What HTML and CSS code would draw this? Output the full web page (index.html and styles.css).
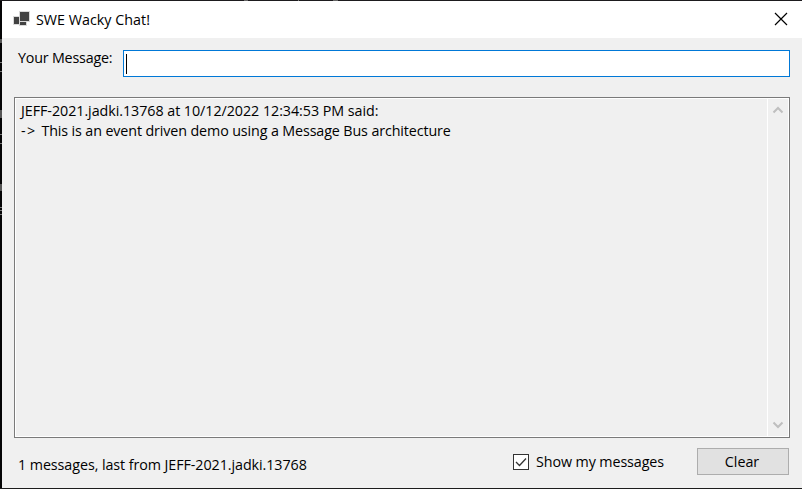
FILE: index.html
```html
<!DOCTYPE html>
<html lang="en">
<head>
<meta charset="utf-8">
<title>SWE Wacky Chat!</title>
<link rel="stylesheet" href="styles.css">
</head>
<body>
<main class="window">
  <header class="titlebar">
    <svg class="app-icon" width="17" height="17" viewBox="0 0 17 17" shape-rendering="crispEdges">
      <path fill="#d9d9d9" d="M6 0h11v11h-3v4H6v-1H0V5h6z"/>
      <path fill="#424242" d="M7 1h9v9H7zM1 6h5v7H1zM7 11h6v3H7z"/>
      <path fill="none" stroke="#d9d9d9" d="M6.500 1v13M6 10.500h10"/>
    </svg>
    <h1 class="title">SWE Wacky Chat!</h1>
    <svg class="close" width="14" height="14" viewBox="0 0 14 14"><path d="M1 1l12 12M13 1L1 13"/></svg>
  </header>
  <div class="compose">
    <label class="compose-label">Your Message:</label>
    <div class="field"><span class="caret"></span></div>
  </div>
  <section class="log">
    <div class="log-text">
      <p class="meta">JEFF-2021.jadki.13768 at 10/12/2022 12:34:53 PM said:</p>
      <p class="message"><span class="arrow">-&gt; </span>This is an event driven demo using a Message Bus architecture</p>
    </div>
    <div class="scrollbar">
      <svg width="12" height="8" viewBox="0 0 12 8"><path d="M1.500 6.500L6 2l4.500 4.500"/></svg>
      <svg width="12" height="8" viewBox="0 0 12 8"><path d="M1.500 1.500L6 6l4.500-4.500"/></svg>
    </div>
  </section>
  <footer class="footer">
    <span class="status">1 messages, last from JEFF-2021.jadki.13768</span>
    <div class="option">
      <svg class="check" width="16" height="16" viewBox="0 0 16 16">
        <rect x=".5" y=".5" width="15" height="15" fill="#fff" stroke="#333"/>
        <path d="M3 8l3.500 3.500L13 4.500" fill="none" stroke="#333" stroke-width="1.300"/>
      </svg>
      <span class="option-label">Show my messages</span>
    </div>
    <button class="clear">Clear</button>
  </footer>
</main>
</body>
</html>
```
FILE: styles.css
```css
* { box-sizing: border-box; }
body {
  margin: 0;
  height: 489px;
  padding: 1px 0 1px 2px;
  background: linear-gradient(#666, #666) 244px 0 / 4px 1px no-repeat,
    linear-gradient(#777, #777) 298px 0 / 1px 1px no-repeat,
    linear-gradient(#666, #666) 333px 0 / 5px 1px no-repeat,
    linear-gradient(#1d1b1e, #1d1b1e) 0 0 / 100% 1px no-repeat,
    linear-gradient(#1c1c1c, #1c1c1c) 0 100% / 100% 1px no-repeat,
    linear-gradient(#555, #555) 0 39px / 2px 4px no-repeat,
    linear-gradient(#777, #777) 0 62px / 2px 1px no-repeat,
    linear-gradient(#777, #777) 0 71px / 2px 1px no-repeat,
    linear-gradient(#555, #555) 0 110px / 2px 8px no-repeat,
    linear-gradient(#777, #777) 0 134px / 2px 1px no-repeat,
    linear-gradient(#777, #777) 0 143px / 2px 1px no-repeat,
    linear-gradient(#555, #555) 0 184px / 2px 7px no-repeat,
    linear-gradient(#777, #777) 0 207px / 2px 1px no-repeat,
    linear-gradient(#777, #777) 0 210px / 2px 1px no-repeat,
    linear-gradient(#777, #777) 0 214px / 2px 1px no-repeat, #050506;
  color: #000;
  font: 14.300px/20px "Open Sans", "Noto Sans", sans-serif;
  overflow: hidden;
}
h1, p { margin: 0; font: inherit; white-space: nowrap; }
.window { height: 487px; display: flex; flex-direction: column; background: #f0f0f0; }
.titlebar { height: 37px; display: flex; align-items: center; padding: 0 14px 0 11px; background: #fff; }
.app-icon { margin-right: 6px; }
.title { letter-spacing: .02px; }
.close { margin-left: auto; margin-bottom: 1px; fill: none; stroke: #000; stroke-width: 1.200; }
.compose { display: flex; height: 27px; margin: 12px 12px 20px 16px; }
.compose-label { width: 105px; line-height: 15px; letter-spacing: -.2px; white-space: nowrap; }
.field { flex: 1; padding: 3px 2px; background: #fff; border: 1px solid #0078d7; }
.caret { display: block; width: 1px; height: 20px; background: #000; }
.log { height: 341px; margin: 0 12px; display: flex; border: 1px solid #7a7a7a; box-shadow: inset 0 0 0 1px #fff; }
.log-text { flex: 1; padding: 3px 0 0 6px; }
.meta { letter-spacing: -.05px; }
.message { letter-spacing: -.12px; }
.arrow { letter-spacing: 1.300px; }
.scrollbar { width: 21px; margin: 1px 1px 1px 0; border-left: 1px solid #fff; display: flex; flex-direction: column; justify-content: space-between; padding: 7px 0 7px 4px; }
.scrollbar svg { fill: none; stroke: #bfbfbf; stroke-width: 2; }
.footer { display: flex; height: 27px; margin: 10px 13px 0 16px; white-space: nowrap; }
.status { width: 495px; line-height: 34px; letter-spacing: -.07px; }
.option { display: flex; flex: 1; align-items: center; }
.check { margin-right: 7px; }
.option-label { letter-spacing: -.1px; }
.clear { width: 92px; height: 27px; padding: 0 2px 0 0; border: 1px solid #adadad; background: #e1e1e1; color: #000; font: inherit; letter-spacing: 0; }
```
